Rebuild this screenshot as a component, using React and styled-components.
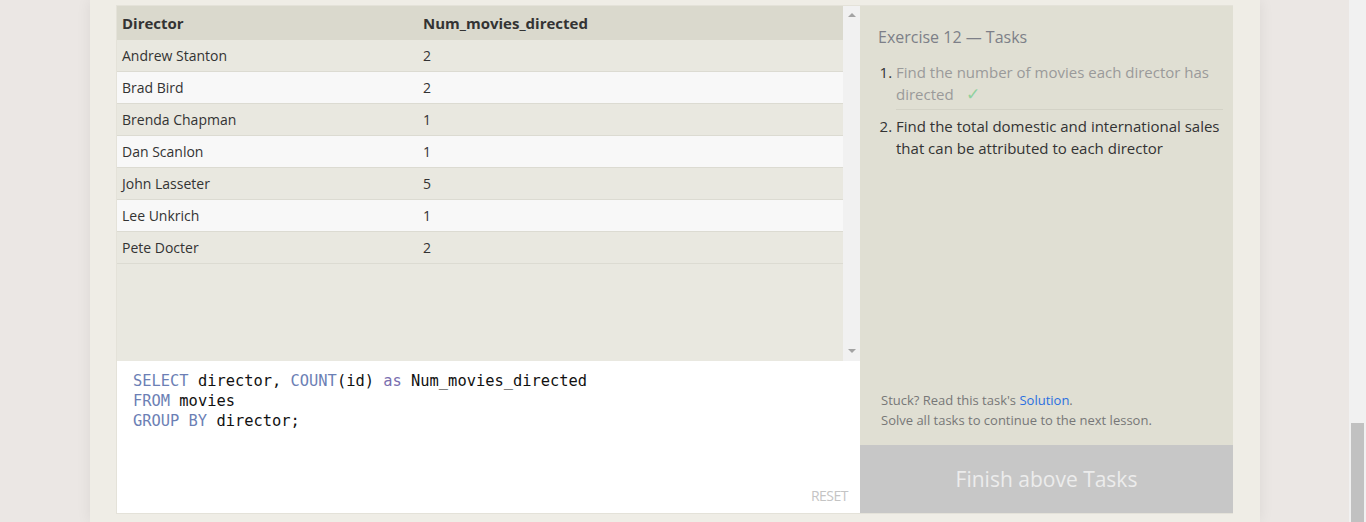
import styled, { createGlobalStyle } from "styled-components";

const GlobalStyle = createGlobalStyle`
  html, body {
    margin: 0;
    padding: 0;
    background: #ebe7e4;
    font-family: "Open Sans", "Liberation Sans", sans-serif;
    overflow: hidden;
  }
`;

const results = [
  ["Andrew Stanton", 2],
  ["Brad Bird", 2],
  ["Brenda Chapman", 1],
  ["Dan Scanlon", 1],
  ["John Lasseter", 5],
  ["Lee Unkrich", 1],
  ["Pete Docter", 2],
];

const App = () => {
  return (
    <Page>
      <GlobalStyle />
      <Gutter />
      <Container>
        <Panel>
          <LeftCol>
            <ResultArea>
              <Table>
                <HeadCell>Director</HeadCell>
                <HeadCell>Num_movies_directed</HeadCell>
                {results.map(([name, n], i) => (
                  <Row key={name} $even={i % 2 === 1}>
                    <Cell>{name}</Cell>
                    <Cell>{n}</Cell>
                  </Row>
                ))}
              </Table>
              <InnerScroll>
                <Arrow $up />
                <Arrow />
              </InnerScroll>
            </ResultArea>
            <Editor>
              <Code>
                <Kw>SELECT</Kw> director, <Kw>COUNT</Kw>(id) <As>as</As> Num_movies_directed
                {"\n"}
                <Kw>FROM</Kw> movies
                {"\n"}
                <Kw>GROUP BY</Kw> director;
              </Code>
              <Reset>RESET</Reset>
            </Editor>
          </LeftCol>
          <TaskPane>
            <TaskBody>
              <TaskTitle>Exercise 12 — Tasks</TaskTitle>
              <TaskList>
                <Task $done>
                  Find the number of movies each director has directed
                  <Check>✓</Check>
                </Task>
                <Task>
                  Find the total domestic and international sales that can be
                  attributed to each director
                </Task>
              </TaskList>
              <Hint>
                Stuck? Read this task's <SolutionLink>Solution</SolutionLink>.
                <br />
                Solve all tasks to continue to the next lesson.
              </Hint>
            </TaskBody>
            <FinishButton>Finish above Tasks</FinishButton>
          </TaskPane>
        </Panel>
      </Container>
      <Gutter $right />
      <PageScroll>
        <Thumb />
      </PageScroll>
    </Page>
  );
};

export default App;

const Page = styled.div`
  display: flex;
  height: 522px;
  width: 1366px;
`;

const Gutter = styled.div`
  width: ${(p) => (p.$right ? "89px" : "90px")};
  flex-shrink: 0;
  background: #ebe7e4;
`;

const Container = styled.div`
  width: 1170px;
  flex-shrink: 0;
  background: #efede6;
  box-shadow: 0 0 14px rgba(0, 0, 0, 0.07);
  position: relative;
  z-index: 1;
  padding: 5px 27px 0 26px;
  box-sizing: border-box;
`;

const Panel = styled.div`
  display: grid;
  grid-template-columns: 743px 373px;
  border: 1px solid #e4e2d9;
  height: 507px;
`;

const LeftCol = styled.div`
  display: flex;
  flex-direction: column;
`;

const ResultArea = styled.div`
  display: flex;
  height: 355px;
  background: #e9e8e0;
`;

const Table = styled.div`
  flex: 1;
  display: grid;
  grid-template-columns: 301px 1fr;
  align-content: start;
`;

const HeadCell = styled.div`
  background: #dad9cd;
  height: 34px;
  line-height: 34px;
  padding-left: 5px;
  font-size: 15px;
  font-weight: 700;
  color: #333;
`;

const Row = styled.div`
  display: contents;
  & > div {
    background: ${(p) => (p.$even ? "#f8f8f8" : "#e9e8e0")};
  }
`;

const Cell = styled.div`
  height: 31px;
  line-height: 31px;
  padding-left: 5px;
  font-size: 14px;
  color: #333;
  border-bottom: 1px solid #dcdbd2;
`;

const InnerScroll = styled.div`
  width: 17px;
  background: #f1f1f1;
  display: flex;
  flex-direction: column;
  justify-content: space-between;
  align-items: center;
  padding: 7px 0 8px;
  box-sizing: border-box;
`;

const Arrow = styled.div`
  width: 0;
  height: 0;
  border-left: 4px solid transparent;
  border-right: 4px solid transparent;
  ${(p) =>
    p.$up
      ? "border-bottom: 4px solid #a3a3a3;"
      : "border-top: 4px solid #a3a3a3;"}
`;

const Editor = styled.div`
  flex: 1;
  background: #fff;
  position: relative;
  padding: 10px 16px;
`;

const Code = styled.pre`
  margin: 0;
  font-family: "DejaVu Sans Mono", "Liberation Mono", monospace;
  font-size: 15.4px;
  line-height: 20px;
  color: #111;
`;

const Kw = styled.span`
  color: #6c7fb5;
`;

const As = styled.span`
  color: #7a6fb0;
`;

const Reset = styled.span`
  position: absolute;
  right: 12px;
  bottom: 8px;
  font-size: 14px;
  color: #c4c4c4;
  letter-spacing: -0.5px;
`;

const TaskPane = styled.div`
  display: flex;
  flex-direction: column;
  background: #e0dfd3;
`;

const TaskBody = styled.div`
  flex: 1;
  display: flex;
  flex-direction: column;
  padding: 20px 10px 15px 18px;
`;

const TaskTitle = styled.div`
  font-size: 16px;
  color: #7d7f88;
  line-height: 22px;
`;

const TaskList = styled.ol`
  margin: 13px 0 0;
  padding-left: 18px;
  flex: 1;
`;

const Task = styled.li`
  font-size: 15px;
  line-height: 22px;
  color: ${(p) => (p.$done ? "#9a9a9a" : "#333")};
  padding-bottom: ${(p) => (p.$done ? "4px" : "0")};
  margin-bottom: ${(p) => (p.$done ? "5px" : "0")};
  border-bottom: ${(p) => (p.$done ? "1px solid #d3d2c6" : "none")};
  &::marker {
    color: #333;
  }
`;

const Check = styled.span`
  display: inline-block;
  color: #8fd19e;
  margin-left: 12px;
  font-size: 17px;
  line-height: 1;
`;

const Hint = styled.div`
  font-size: 13px;
  line-height: 20px;
  color: #777;
  padding-left: 3px;
`;

const SolutionLink = styled.a`
  color: #2a6fe0;
  text-decoration: none;
`;

const FinishButton = styled.div`
  height: 68px;
  background: #c7c7c7;
  color: #ececec;
  font-size: 21px;
  display: flex;
  align-items: center;
  justify-content: center;
`;

const PageScroll = styled.div`
  width: 17px;
  flex-shrink: 0;
  background: #f1f1f1;
  display: flex;
  flex-direction: column;
  justify-content: flex-end;
  align-items: center;
`;

const Thumb = styled.div`
  width: 13px;
  height: 99px;
  background: #c1c1c1;
`;
